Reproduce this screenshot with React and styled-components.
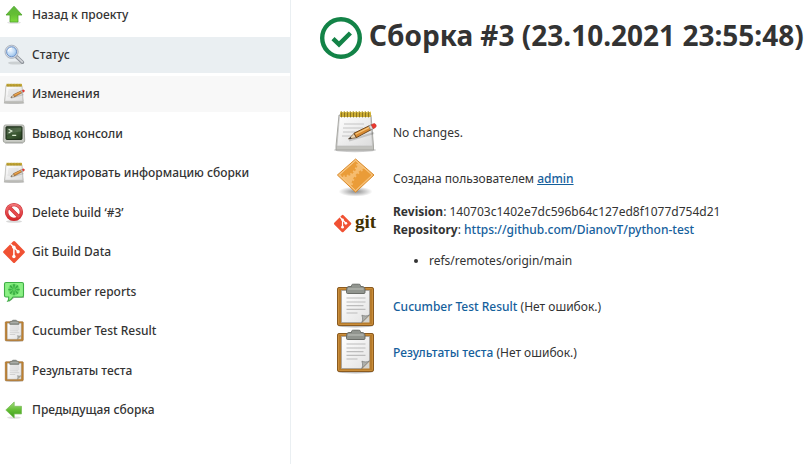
import React from "react";
import styled, { createGlobalStyle } from "styled-components";

const GlobalStyle = createGlobalStyle`
  *, *::before, *::after { box-sizing: border-box; }
  body {
    margin: 0;
    overflow: hidden;
    background: #fff;
    color: #333;
    font: 400 12px/18px "Noto Sans", "Open Sans", sans-serif;
  }
`;

const Page = styled.div`
  display: flex;
  min-height: 100vh;
`;

const Sidebar = styled.nav`
  flex: 0 0 291px;
  display: flex;
  flex-direction: column;
  justify-content: space-between;
  gap: 3px;
  margin-top: -3px;
  padding-bottom: 36px;
  border-right: 1px solid #eaeff2;
`;

const backgrounds = { active: "#eaeff2", hover: "#f8f8f8" };

const TaskLink = styled.a`
  display: flex;
  align-items: center;
  gap: 6px;
  height: 36px;
  padding-left: 2px;
  background: ${({ $state }) => backgrounds[$state] || "transparent"};
  color: #333;
  font-weight: 500;
  text-decoration: none;
  white-space: nowrap;
`;

const Main = styled.main`
  flex: 1;
  min-width: 0;
  padding: 14px 0 0 29px;
  overflow: hidden;
`;

const Title = styled.h1`
  display: flex;
  align-items: flex-start;
  gap: 7px;
  margin: 0 0 51px;
  font-size: 28px;
  font-weight: 700;
  line-height: 42px;
  white-space: nowrap;
`;

const StatusIcon = styled.svg`
  flex: none;
  width: 42px;
  height: 42px;
  margin-top: 3px;
`;

const Summary = styled.section`
  display: flex;
  flex-direction: column;
  padding-left: 11px;
`;

const SummaryRow = styled.div`
  display: flex;
  align-items: ${({ $top }) => ($top ? "flex-start" : "center")};
  gap: 14px;
  min-height: 46px;
`;

const IconCell = styled.div`
  display: flex;
  align-items: center;
  flex: 0 0 48px;
  height: 46px;
  padding-bottom: 2px;
`;

const Details = styled.div`
  padding: 1px 0 14px;
`;

const Refs = styled.ul`
  margin: 13px 0 0;
  padding-left: 36px;
`;

const Link = styled.a`
  color: #15609c;
  font-weight: 500;
  text-decoration: ${({ $underlined }) => ($underlined ? "underline" : "none")};
`;

const Icon = styled.svg`
  flex: none;
  width: ${({ $size }) => $size || 24}px;
  height: ${({ $size }) => $size || 24}px;
  overflow: visible;
`;

function Arrow({ left }) {
  const id = left ? "arrow-left" : "arrow-up";
  return (
    <Icon viewBox="0 0 24 24" aria-hidden="true">
      <defs>
        <linearGradient id={id} x1="0" y1="0" x2="0" y2="1">
          <stop offset="0" stopColor={left ? "#a5dc80" : "#5cb83a"} />
          <stop offset="0.5" stopColor="#63bd34" />
          <stop offset="1" stopColor={left ? "#3c9a1c" : "#7ddb3c"} />
        </linearGradient>
      </defs>
      <ellipse cx="12" cy="19.6" rx="7" ry="1.2" fill="#000" opacity="0.12" />
      <path
        d={left ? "M3.8 12 12.2 4v4.3h7.3v7.6h-7.3V20z" : "M12 3.2 20 12h-4v7H8v-7H4z"}
        fill={`url(#${id})`}
        stroke={left ? "#7cbf5c" : "#4fa32c"}
        strokeWidth="0.8"
        strokeLinejoin="round"
      />
    </Icon>
  );
}

function Magnifier() {
  return (
    <Icon viewBox="0 0 24 24" aria-hidden="true">
      <defs>
        <radialGradient id="lens" cx="0.4" cy="0.35" r="0.7">
          <stop offset="0" stopColor="#f2f8ff" />
          <stop offset="0.6" stopColor="#bcd8f5" />
          <stop offset="1" stopColor="#8db8e8" />
        </radialGradient>
      </defs>
      <ellipse cx="14" cy="20" rx="8" ry="1.6" fill="#000" opacity="0.13" />
      <path d="m14.4 13.6 6 5.6" stroke="#8e939b" strokeWidth="3.6" strokeLinecap="round" />
      <path d="m15.2 14.2 5 4.6" stroke="#d3d6da" strokeWidth="1.8" strokeLinecap="round" />
      <circle cx="9.6" cy="8.8" r="6.6" fill="#d9dde4" stroke="#a1a9b8" strokeWidth="0.8" />
      <circle cx="9.6" cy="8.8" r="5" fill="url(#lens)" stroke="#6d93c9" strokeWidth="1" />
      <path d="M6 8.4c.4-2 1.8-3.2 3.8-3.2" fill="none" stroke="#fff" strokeWidth="1.1" />
    </Icon>
  );
}

function Notepad({ size }) {
  const id = `pad-${size || 24}`;
  return (
    <Icon $size={size} viewBox="0 0 48 48" aria-hidden="true">
      <defs>
        <linearGradient id={id} x1="0" y1="0" x2="1" y2="1">
          <stop offset="0" stopColor="#fff" />
          <stop offset="1" stopColor="#dcdcdc" />
        </linearGradient>
      </defs>
      <ellipse cx="24" cy="42" rx="21" ry="2.2" fill="#000" opacity="0.2" />
      <path d="M8 7h32l2.5 31v4H5v-4z" fill="#c2c2be" stroke="#9a9a96" strokeWidth="0.8" />
      <path d="M8.5 8h31L41.5 38H6z" fill={`url(#${id})`} stroke="#bbb" strokeWidth="0.6" />
      <path d="M9 4h31v5H9z" fill="#cdae35" />
      {[10, 13, 16, 19, 22, 25, 28, 31, 34, 37].map((x) => (
        <path key={x} d={`M${x + 0.5} 3.4v6`} stroke="#8b7420" strokeWidth="1" />
      ))}
      <path d="M9 4h31" stroke="#e9d674" strokeWidth="1.2" strokeDasharray="1.6 1.4" />
      <path d="M13 16h20M12 20h20M12 24h15M11 28h10" stroke="#c4c4c4" strokeWidth="1" />
      <path d="M18 32.5 43 25" stroke="#000" strokeWidth="2.2" opacity="0.15" />
      <path d="m17.5 31 5.6-5.6 2.4 4.2z" fill="#ead6b7" stroke="#6c4a26" strokeWidth="0.7" />
      <path d="m17.5 31 2.1-2.1 1 1.5z" fill="#222" />
      <path d="m23 25.2 15.4-7.5 2 3.9-15 8z" fill="#d88a31" stroke="#643d14" strokeWidth="0.9" />
      <path d="m24.4 26.2 14.4-7.1" stroke="#f8c578" strokeWidth="1.2" />
      <path d="m37.7 18 2.6-1.3 2 4-2.6 1.3z" fill="#d8d8d8" stroke="#777" strokeWidth="0.6" />
      <path d="m40.3 16.7 2.3-1c2-.6 3.6 2.4 1.8 3.8l-2.1 1.2z" fill="#ed382f" stroke="#b9322c" strokeWidth="0.6" />
    </Icon>
  );
}

function Terminal() {
  return (
    <Icon viewBox="0 0 24 24" aria-hidden="true">
      <defs>
        <linearGradient id="screen" x1="0" y1="0" x2="1" y2="1">
          <stop offset="0" stopColor="#263d22" />
          <stop offset="0.55" stopColor="#3d5b34" />
          <stop offset="1" stopColor="#243a1e" />
        </linearGradient>
      </defs>
      <path d="M3 21h18" stroke="#000" strokeWidth="1.4" opacity="0.25" />
      <path
        d="M3.5 3h17A1.5 1.5 0 0 1 22 4.4l.7 13.6a2 2 0 0 1-2 2.4H3.3a2 2 0 0 1-2-2.4L2 4.4A1.5 1.5 0 0 1 3.5 3z"
        fill="#c9cbc5"
        stroke="#a5a8a1"
      />
      <rect x="4" y="4.8" width="16" height="12.6" rx="0.6" fill="url(#screen)" stroke="#182915" />
      <path d="M4.6 5.4h14.8v4.2c-4 .2-8.6 1-14.8 3.4z" fill="#fff" opacity="0.12" />
      <path d="m6.6 7.2 3.2 1.9L6.600 11M10.2 13.4h4" fill="none" stroke="#dcecd3" strokeWidth="1.2" />
    </Icon>
  );
}

function NoEntry() {
  return (
    <Icon viewBox="0 0 24 24" aria-hidden="true">
      <defs>
        <linearGradient id="ban" x1="0" y1="0" x2="0" y2="1">
          <stop offset="0" stopColor="#f17476" />
          <stop offset="1" stopColor="#d5262a" />
        </linearGradient>
      </defs>
      <ellipse cx="12" cy="20.4" rx="8" ry="1.4" fill="#000" opacity="0.15" />
      <circle cx="12" cy="11" r="7.4" fill="none" stroke="#c93034" strokeWidth="3.4" />
      <path d="m7 6 10 10" stroke="#c93034" strokeWidth="3.4" />
      <circle cx="12" cy="11" r="7.4" fill="none" stroke="url(#ban)" strokeWidth="2.4" />
      <path d="m6.8 5.8 10.4 10.4" stroke="#e64a4d" strokeWidth="2.4" />
    </Icon>
  );
}

const gitDiamond =
  "M22.4 10.9 13.1 1.6a1.5 1.5 0 0 0-2.1 0L1.6 10.9a1.5 1.5 0 0 0 0 2.1l9.4 9.4a1.5 1.5 0 0 0 2.1 0l9.3-9.4a1.5 1.5 0 0 0 0-2.1z";

function GitShape() {
  return (
    <>
      <path d={gitDiamond} fill="#f05133" />
      <path d="m8.6 4 3.2 3.2 4.3 4.4M11.9 7.3v9" fill="none" stroke="#fff" strokeWidth="1.5" />
      <circle cx="11.9" cy="7.3" r="1.7" fill="#fff" />
      <circle cx="16.1" cy="11.7" r="1.7" fill="#fff" />
      <circle cx="11.9" cy="16.5" r="1.7" fill="#fff" />
    </>
  );
}

function GitIcon() {
  return (
    <Icon viewBox="0 0 24 24" aria-hidden="true">
      <GitShape />
    </Icon>
  );
}

function GitLogo() {
  return (
    <Icon $size={48} viewBox="0 0 48 48" role="img" aria-label="git">
      <g transform="translate(2 14) scale(0.8)">
        <GitShape />
      </g>
      <text x="24" y="28" fill="#413000" fontFamily="'Liberation Serif', serif" fontWeight="700" fontSize="19">
        git
      </text>
    </Icon>
  );
}

function Cucumber() {
  const seeds = [0, 45, 90, 135, 180, 225, 270, 315];
  return (
    <Icon viewBox="0 0 24 24" aria-hidden="true">
      <path d="M5 4h17v14H12l-5 4z" fill="#000" opacity="0.3" />
      <path
        d="M4 2.5h16A1.5 1.5 0 0 1 21.5 4v11.5A1.5 1.5 0 0 1 20 17h-9c-1 2-2.500 3.500-5.200 4.200.8-1.200 1.100-2.600.9-4.200H4a1.500 1.500 0 0 1-1.500-1.500V4A1.500 1.500 0 0 1 4 2.500z"
        fill="#8bf084"
        stroke="#3fae46"
        strokeWidth="1.1"
      />
      <circle cx="12" cy="9.6" r="5.8" fill="#69da68" />
      <g fill="#3aad43">
        {seeds.map((angle) => (
          <ellipse key={angle} cx="12" cy="5.6" rx="0.9" ry="1.8" transform={`rotate(${angle} 12 9.6)`} />
        ))}
      </g>
      <circle cx="12" cy="9.6" r="1.9" fill="#5fd35f" stroke="#3aad43" strokeWidth="0.7" />
    </Icon>
  );
}

function Clipboard({ size }) {
  const id = `sheet-${size || 24}`;
  return (
    <Icon $size={size} viewBox="0 0 48 48" aria-hidden="true">
      <defs>
        <linearGradient id={id} x1="0" y1="0" x2="1" y2="1">
          <stop offset="0" stopColor="#fff" />
          <stop offset="1" stopColor="#e2e2e2" />
        </linearGradient>
      </defs>
      <ellipse cx="24.5" cy="43.8" rx="18" ry="1.6" fill="#000" opacity="0.25" />
      <rect x="6.5" y="5.5" width="36" height="38" rx="1.4" fill="#b57a2b" stroke="#8a5a20" />
      <rect x="7.6" y="6.6" width="33.8" height="35.8" rx="0.8" fill="none" stroke="#cf9340" strokeWidth="0.9" />
      <path d="M10.5 8.5h28V33l-7.5 7.5H10.5z" fill={`url(#${id})`} stroke="#a2a2a2" strokeWidth="0.8" />
      <path d="M15.5 16h19M15.5 20h19M15.5 23.7h17M15.5 27.4h19M15.5 31h11" stroke="#bcbcbc" strokeWidth="1.2" />
      <path d="M30.6 40.6c1.4-2.2 1.2-4.6.3-7.4 2.7 1 5.2 1 7.6-.3z" fill="#aeb0ac" stroke="#747672" strokeWidth="0.7" />
      <path d="M38.5 33.5v7h-7z" fill="#d4d4d0" />
      <path
        d="M18 4.500h2.500V3.500c0-1 1-1.300 2-1.300h5c1.200 0 2 .4 2 1.300v1H31c2 0 3 1.500 3 3.200v2.800c0 .6-.4 1-1 1H16.500c-.6 0-1-.4-1-1V7.700c0-1.700.8-3.200 2.500-3.200z"
        fill="#91958f"
        stroke="#61645f"
        strokeWidth="0.9"
      />
      <path d="M17 7h15.5" stroke="#c0c3bd" strokeWidth="1" />
    </Icon>
  );
}

function BuildDiamond() {
  return (
    <Icon $size={48} viewBox="0 0 48 48" aria-hidden="true">
      <defs>
        <linearGradient id="diamond" x1="0" y1="0" x2="1" y2="1">
          <stop offset="0" stopColor="#f6c27c" />
          <stop offset="1" stopColor="#f5b661" />
        </linearGradient>
        <radialGradient id="diamond-shadow">
          <stop offset="0" stopColor="#000" stopOpacity="0.45" />
          <stop offset="1" stopColor="#000" stopOpacity="0" />
        </radialGradient>
        <clipPath id="diamond-inner">
          <path d="M24.6 7 40.8 21 24.6 36.2 8.6 21z" />
        </clipPath>
      </defs>
      <ellipse cx="24.6" cy="37.6" rx="17" ry="5" fill="url(#diamond-shadow)" />
      <path
        d="M24.6 5 43 21 24.6 38.2 6.4 21z"
        fill="url(#diamond)"
        stroke="#d98a2b"
        strokeWidth="1"
        strokeLinejoin="round"
      />
      <g clipPath="url(#diamond-inner)" fill="#ea9c38" stroke="#ea9c38" strokeWidth="2">
        <circle cx="12" cy="8" r="13.5" stroke="none" />
        <circle cx="12" cy="8" r="14" fill="none" strokeDasharray="2 1.6" />
        <circle cx="41" cy="34" r="19.5" stroke="none" />
        <circle cx="41" cy="34" r="20" fill="none" strokeDasharray="2.4 1.8" />
      </g>
      <path d="M24.6 6.6 41 21 24.6 36.5 8.4 21z" fill="none" stroke="#f9c988" strokeWidth="0.8" />
    </Icon>
  );
}

const tasks = [
  { label: "Назад к проекту", icon: <Arrow /> },
  { label: "Статус", icon: <Magnifier />, state: "active" },
  { label: "Изменения", icon: <Notepad />, state: "hover" },
  { label: "Вывод консоли", icon: <Terminal /> },
  { label: "Редактировать информацию сборки", icon: <Notepad /> },
  { label: "Delete build ‘#3’", icon: <NoEntry /> },
  { label: "Git Build Data", icon: <GitIcon /> },
  { label: "Cucumber reports", icon: <Cucumber /> },
  { label: "Cucumber Test Result", icon: <Clipboard /> },
  { label: "Результаты теста", icon: <Clipboard /> },
  { label: "Предыдущая сборка", icon: <Arrow left /> },
];

function SummaryItem({ icon, top, children }) {
  return (
    <SummaryRow $top={top}>
      <IconCell>{icon}</IconCell>
      {children}
    </SummaryRow>
  );
}

export default function App() {
  return (
    <Page>
      <GlobalStyle />
      <Sidebar>
        {tasks.map(({ label, icon, state }) => (
          <TaskLink key={label} href="#" $state={state}>
            {icon}
            <span>{label}</span>
          </TaskLink>
        ))}
      </Sidebar>
      <Main>
        <Title>
          <StatusIcon viewBox="0 0 42 42" role="img" aria-label="Успешно">
            <circle cx="21" cy="21" r="18.8" fill="none" stroke="#138347" strokeWidth="4.4" />
            <path d="m13 21.6 6 5.8L30.4 16" fill="none" stroke="#138347" strokeWidth="4.4" />
          </StatusIcon>
          Сборка #3 (23.10.2021 23:55:48)
        </Title>
        <Summary>
          <SummaryItem icon={<Notepad size={48} />}>
            <span>No changes.</span>
          </SummaryItem>
          <SummaryItem icon={<BuildDiamond />}>
            <span>
              Создана пользователем <Link href="#" $underlined>admin</Link>
            </span>
          </SummaryItem>
          <SummaryItem icon={<GitLogo />} top>
            <Details>
              <div><b>Revision</b>: 140703c1402e7dc596b64c127ed8f1077d754d21</div>
              <div>
                <b>Repository</b>: <Link href="#">https://github.com/DianovT/python-test</Link>
              </div>
              <Refs>
                <li>refs/remotes/origin/main</li>
              </Refs>
            </Details>
          </SummaryItem>
          <SummaryItem icon={<Clipboard size={48} />}>
            <span><Link href="#">Cucumber Test Result</Link> (Нет ошибок.)</span>
          </SummaryItem>
          <SummaryItem icon={<Clipboard size={48} />}>
            <span><Link href="#">Результаты теста</Link> (Нет ошибок.)</span>
          </SummaryItem>
        </Summary>
      </Main>
    </Page>
  );
}
